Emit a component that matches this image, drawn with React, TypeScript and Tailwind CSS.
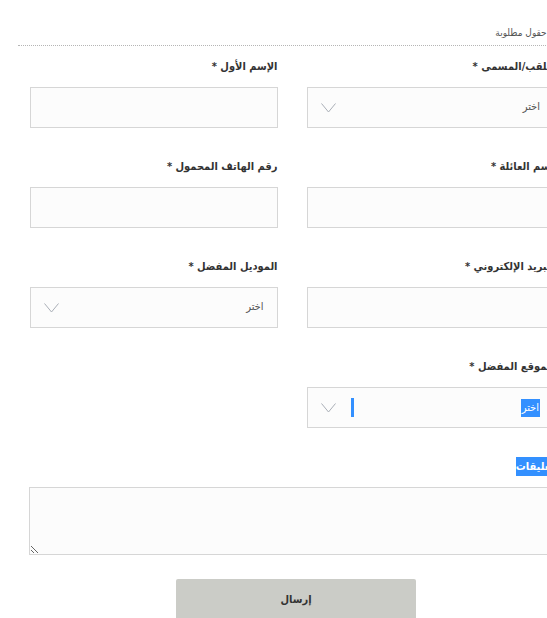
import type { ReactNode } from "react"

function Chevron() {
  return (
    <svg width="15" height="10" viewBox="0 0 15 10" className="shrink-0">
      <polyline points="0.5,0.5 7.5,9 14.5,0.5" fill="none" stroke="#a9aeb6" strokeWidth="1" />
    </svg>
  )
}

function Label({ children }: { children: ReactNode }) {
  return <div className="h-[16px] text-[11px] font-bold leading-[16px] text-[#333] whitespace-nowrap">{children}</div>
}

function Field({ label, children }: { label: ReactNode; children: ReactNode }) {
  return (
    <div className="flex flex-col gap-[12px] pb-[31px]">
      <Label>{label}</Label>
      {children}
    </div>
  )
}

function TextBox() {
  return <input className="h-[41px] w-full border border-[#d6d6d6] bg-[#fcfcfc] px-3 text-[12px] outline-none" />
}

function Select({ selected = false }: { selected?: boolean }) {
  return (
    <div className="flex h-[41px] w-full items-center justify-between border border-[#d6d6d6] bg-[#fcfcfc] pr-[13px] pl-[13px] text-[11px] text-[#555]">
      {selected ? (
        <span className="bg-[#3390ff] px-px leading-[18px] text-white">اختر</span>
      ) : (
        <span>اختر</span>
      )}
      <div className="flex items-center gap-[15px]">
        {selected && <span className="h-[19px] w-[3px] bg-[#3390ff]" />}
        <Chevron />
      </div>
    </div>
  )
}

export default function App() {
  return (
    <div
      className="h-[618px] w-[547px] overflow-hidden bg-white"
      style={{ fontFamily: '"DejaVu Sans Condensed", "DejaVu Sans", "Liberation Sans", sans-serif' }}
    >
      <div dir="rtl" className="ml-[18px] w-[548px]">
        <div className="border-b border-dotted border-[#b5b5b5] pt-[25px] pb-[5px] pr-[12px] text-[10px] leading-[15px] text-[#555]">
          * حقول مطلوبة
        </div>

        <div className="px-[12px] pt-[13px]">
          <div className="grid grid-cols-2 gap-x-[29px]">
            <Field label="اللقب/المسمى *">
              <Select />
            </Field>
            <Field label="الإسم الأول *">
              <TextBox />
            </Field>
            <Field label="إسم العائلة *">
              <TextBox />
            </Field>
            <Field label="رقم الهاتف المحمول *">
              <TextBox />
            </Field>
            <Field label="البريد الإلكتروني *">
              <TextBox />
            </Field>
            <Field label="الموديل المفضل *">
              <Select />
            </Field>
            <Field label="الموقع المفضل *">
              <Select selected />
            </Field>
            <div />
          </div>

          <div className="flex flex-col gap-[11px]">
            <div className="-mt-[2px] h-[19px] text-[11px] font-bold leading-[19px]">
              <span className="inline-block h-[19px] bg-[#3390ff] text-white">تعليقات</span>
            </div>
            <textarea className="block h-[68px] w-[calc(100%+1px)] border border-[#d6d6d6] bg-[#fcfcfc] p-2 text-[12px] outline-none" />
          </div>

          <div className="pt-[24px] pr-[138px]">
            <button className="h-[42px] w-[240px] rounded-[2px] bg-[#cbccc7] text-[11px] font-bold text-[#333]">
              إرسال
            </button>
          </div>
        </div>
      </div>
    </div>
  )
}
